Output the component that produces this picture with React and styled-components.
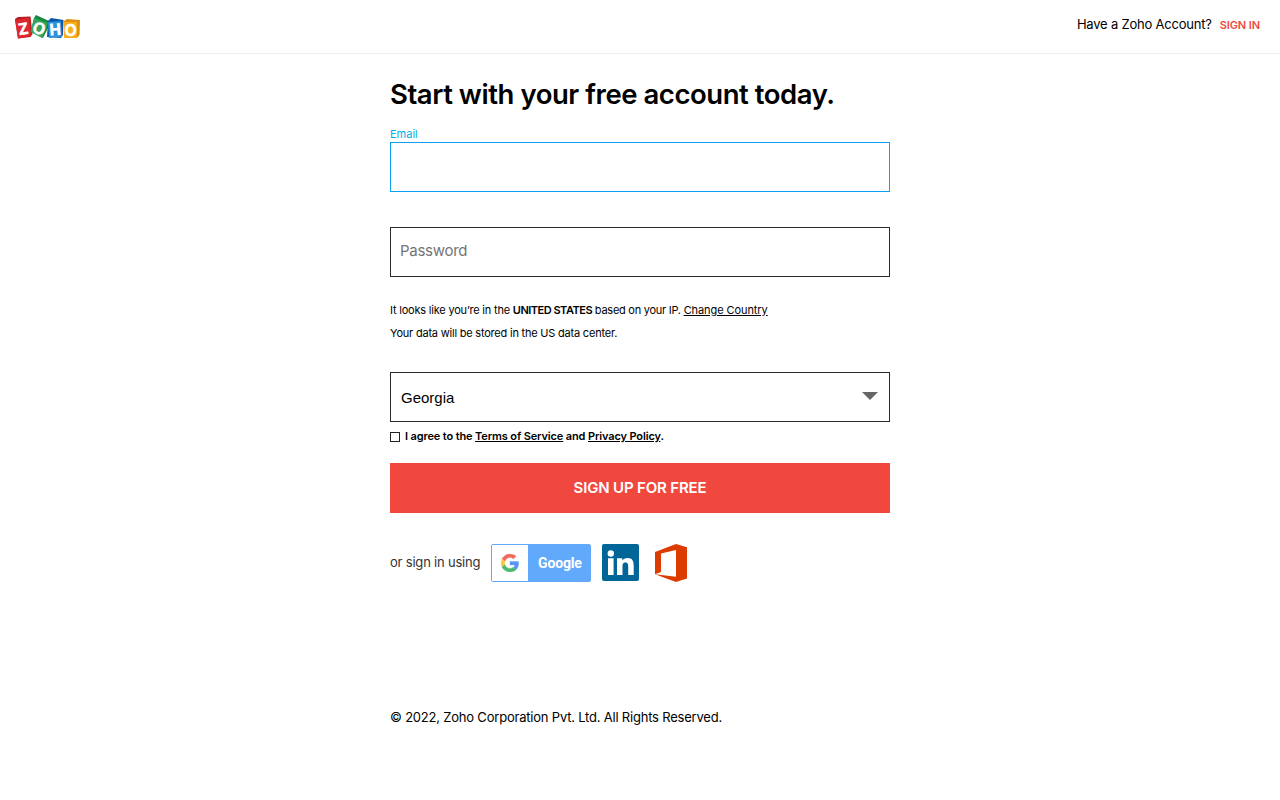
import React from 'react';
import styled, { createGlobalStyle } from 'styled-components';

const GlobalStyle = createGlobalStyle`
  * {
    box-sizing: border-box;
  }

  body {
    margin: 0;
    background: #fff;
    color: #000;
    font-family: Inter, 'Liberation Sans', sans-serif;
  }
`;

const Header = styled.header`
  display: flex;
  justify-content: space-between;
  height: 54px;
  padding: 14px 20px 0 14px;
  border-bottom: 1px solid #f0f0f0;
`;

const HeaderRight = styled.div`
  display: flex;
  gap: 8px;
  font-size: 13px;
  line-height: 21px;
`;

const SignIn = styled.a`
  color: #f0483e;
  font-size: 11px;
  font-weight: 600;
  letter-spacing: -0.1px;
  line-height: 23px;
`;

const Main = styled.main`
  width: 500px;
  margin: 0 auto;
`;

const Title = styled.h1`
  margin: 20px 0 14px;
  font-size: 27.5px;
  font-weight: 600;
  line-height: 41px;
  height: 40px;
  letter-spacing: -0.45px;
  white-space: nowrap;
`;

const Label = styled.label`
  display: block;
  height: 14px;
  color: #00b0e0;
  font-size: 11px;
  line-height: 13px;
`;

const Input = styled.input`
  display: block;
  width: 100%;
  height: 50px;
  margin-bottom: ${(props) => (props.$active ? '35px' : '0')};
  padding: 0 9px 3px;
  border: 1px solid ${(props) => (props.$active ? '#0ba1f0' : '#2b2b2b')};
  border-radius: 0;
  outline: none;
  font-family: inherit;
  font-size: 15px;
  letter-spacing: -0.28px;

  &::placeholder {
    color: #757575;
  }
`;

const Note = styled.div`
  margin: 22px 0 27px;
  font-size: 11px;
  line-height: 23px;
  white-space: nowrap;
`;

const Link = styled.a`
  text-decoration: underline;
  text-underline-offset: 1px;
`;

const Select = styled.div`
  display: flex;
  align-items: center;
  justify-content: space-between;
  height: 50px;
  padding: 0 11px 0 10px;
  border: 1px solid #2b2b2b;
  font-family: 'Liberation Sans', Arial, sans-serif;
  font-size: 15px;
`;

const Arrow = styled.span`
  margin-bottom: 3px;
  border-top: 8px solid #666;
  border-right: 8px solid transparent;
  border-left: 8px solid transparent;
`;

const Agree = styled.div`
  display: flex;
  align-items: center;
  gap: 5px;
  height: 30px;
  font-size: 11px;
  font-weight: 600;
  white-space: nowrap;
`;

const AgreeText = styled.span`
  padding-bottom: 2px;
  letter-spacing: -0.135px;
`;

const Checkbox = styled.span`
  width: 10px;
  height: 10px;
  border: 1px solid #222;
`;

const SubmitButton = styled.button`
  display: block;
  width: 100%;
  height: 50px;
  margin-top: 11px;
  padding: 0 0 2px;
  border: 0;
  background: #f0483e;
  color: #fff;
  font-family: inherit;
  font-size: 15px;
  font-weight: 600;
  letter-spacing: -0.17px;
`;

const Social = styled.div`
  display: flex;
  align-items: center;
  height: 38px;
  margin-top: 30.5px;
  color: #333;
  font-size: 13px;
`;

const SocialLabel = styled.span`
  width: 101px;
  padding-bottom: 1px;
  letter-spacing: -0.2px;
`;

const GoogleButton = styled.a`
  display: flex;
  width: 100px;
  height: 38px;
  margin-right: 11px;
  border: 1px solid #61a9fb;
  border-radius: 2px;
  background: #61a9fb;
  color: #fff;
  font-family: Roboto, sans-serif;
  font-size: 14px;
  font-weight: 700;
  letter-spacing: -0.15px;
  line-height: 37px;
`;

const GoogleIcon = styled.span`
  display: flex;
  align-items: center;
  justify-content: center;
  width: 36px;
  margin-right: 10px;
  background: #fff;
`;

const Footer = styled.footer`
  margin-top: 125.5px;
  font-size: 13px;
  line-height: 21px;
`;

const Tracked = styled.span`
  font-weight: ${(props) => (props.$strong ? 600 : 'inherit')};
  letter-spacing: ${(props) => props.$by}px;
`;

const ZohoLogo = () => (
  <svg
    width="67"
    height="26"
    viewBox="0 0 67 26"
    fontFamily="'Open Sans', sans-serif"
    fontWeight="700"
    fontSize="16"
    fill="#fff"
  >
    <path d="M1 5L4 3L16.500 2.500L18.500 20L16.500 23L4 24.500Z" fill="#b91c24" />
    <path d="M1 6L15 4L17 22L4 24.500Z" fill="#df2730" />
    <path d="M20 4L22 1L35 7L36 10L29 24L17 17Z" fill="#168a43" />
    <path d="M20 4L34 9L28 24L16.500 18Z" fill="#35a65a" />
    <path d="M34 7L37 4L49.500 6L49 21L47 24L33 23Z" fill="#0758a6" />
    <path d="M34 8L47 7L48 23L35 24Z" fill="#2a91da" />
    <path d="M50 7L53 5L66 6L65.500 21L63 24L50 23Z" fill="#dc8f10" />
    <path d="M50 8L63 8V24H50Z" fill="#f8ae1a" />
    <g stroke="#fff" strokeWidth="0.4">
      <text x="4.500" y="20.500" transform="rotate(-8 9 14)">Z</text>
      <text x="19" y="20" transform="rotate(24 25 14)">O</text>
      <text x="35" y="21" transform="rotate(-4 41 15)">H</text>
      <text x="50.300" y="22">O</text>
    </g>
  </svg>
);

const GoogleLogo = () => (
  <svg width="18" height="18" viewBox="0 0 48 48">
    <path fill="#f06a5e" stroke="#f06a5e" d="M24 9.500c3.540 0 6.710 1.220 9.210 3.600l6.850-6.850C35.900 2.380 30.470 0 24 0 14.620 0 6.510 5.380 2.560 13.220l7.980 6.190C12.430 13.720 17.740 9.500 24 9.500z" />
    <path fill="#5a95f5" stroke="#5a95f5" d="M46.980 24.550c0-1.570-.15-3.090-.38-4.550H24v9.020h12.940c-.58 2.960-2.260 5.480-4.780 7.180l7.730 6c4.510-4.180 7.090-10.360 7.090-17.650z" />
    <path fill="#fbc93a" stroke="#fbc93a" d="M10.530 28.590c-.48-1.450-.76-2.990-.76-4.590s.27-3.140.76-4.590l-7.980-6.190C.92 16.460 0 20.120 0 24c0 3.880.92 7.540 2.560 10.780l7.970-6.190z" />
    <path fill="#4cb96b" stroke="#4cb96b" d="M24 48c6.480 0 11.930-2.130 15.890-5.810l-7.730-6c-2.150 1.450-4.920 2.300-8.160 2.300-6.260 0-11.570-4.220-13.470-9.910l-7.980 6.190C6.510 42.620 14.620 48 24 48z" />
  </svg>
);

const LinkedInLogo = () => (
  <svg width="37" height="37" viewBox="0 0 37 37">
    <rect width="37" height="37" rx="2" fill="#026597" />
    <circle cx="8.800" cy="9.500" r="3.200" fill="#fff" />
    <path fill="#fff" d="M6 14.300h5.600V31H6zM15 14.300h5.300v2.300c1-1.700 2.900-2.700 5.300-2.700 5 0 6.100 3.300 6.100 7.900V31h-5.500v-8.200c0-2-.1-4.300-2.700-4.300s-3 2-3 4.200V31H15z" />
  </svg>
);

const OfficeLogo = () => (
  <svg width="33" height="38" viewBox="0 0 33 38">
    <path fill="#dc3c00" d="M0 8L21 0L32 3.200V34.500L21 38L0 30.300L21 32.800V6L6 9.500V28L0 30.300Z" />
  </svg>
);

const IconLink = styled.a`
  display: flex;
  margin-right: 16px;
`;

const App = () => (
  <>
    <GlobalStyle />
    <Header>
      <ZohoLogo />
      <HeaderRight>
        <Tracked $by={-0.21}>Have a Zoho Account?</Tracked>
        <SignIn>SIGN IN</SignIn>
      </HeaderRight>
    </Header>
    <Main>
      <Title>Start with your free account today.</Title>
      <Label>Email</Label>
      <Input $active />
      <Input placeholder="Password" />
      <Note>
        <div>
          <Tracked $by={-0.2}>It looks like you’re in the </Tracked>
          <Tracked $strong $by={-0.5}>UNITED STATES</Tracked>
          <Tracked $by={-0.26}> based on your IP. </Tracked>
          <Tracked $by={-0.08}>
            <Link>Change Country</Link>
          </Tracked>
        </div>
        <Tracked $by={-0.21}>Your data will be stored in the US data center.</Tracked>
      </Note>
      <Select>
        Georgia
        <Arrow />
      </Select>
      <Agree>
        <Checkbox />
        <AgreeText>
          I agree to the <Link>Terms of Service</Link> and <Link>Privacy Policy</Link>.
        </AgreeText>
      </Agree>
      <SubmitButton>SIGN UP FOR FREE</SubmitButton>
      <Social>
        <SocialLabel>or sign in using</SocialLabel>
        <GoogleButton>
          <GoogleIcon>
            <GoogleLogo />
          </GoogleIcon>
          Google
        </GoogleButton>
        <IconLink>
          <LinkedInLogo />
        </IconLink>
        <IconLink>
          <OfficeLogo />
        </IconLink>
      </Social>
      <Footer>
        <Tracked $by={-0.205}>© 2022, Zoho Corporation Pvt. Ltd. All Rights Reserved.</Tracked>
      </Footer>
    </Main>
  </>
);

export default App;
